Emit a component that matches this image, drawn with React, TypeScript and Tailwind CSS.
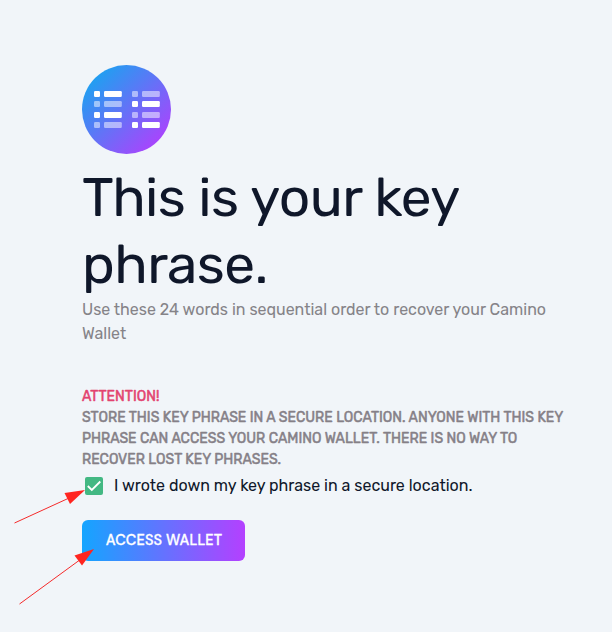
const tiles = [
  { x: 94, solid: [true, false, true, false] },
  { x: 132, solid: [false, true, false, true] },
];
const tileRows = [91, 101, 112, 122];

function PhraseIcon() {
  return (
    <svg className="block size-[89px]" viewBox="82 65 89 89" aria-hidden="true">
      <defs>
        <linearGradient id="disc" x1="0.05" y1="0.1" x2="0.9" y2="0.95">
          <stop offset="0" stopColor="#14a7f0" />
          <stop offset="1" stopColor="#b43dfe" />
        </linearGradient>
      </defs>
      <circle cx="126.5" cy="109.5" r="44.5" fill="url(#disc)" />
      {tiles.map((t) =>
        tileRows.map((y, i) => (
          <g key={`${t.x}-${y}`} fill="#fff" fillOpacity={t.solid[i] ? 1 : 0.5}>
            <rect x={t.x} y={y} width="6" height="6" rx="1.2" />
            <rect x={t.x + 10} y={y} width="17.8" height="6" rx="1.2" />
          </g>
        )),
      )}
    </svg>
  );
}

function Arrows() {
  return (
    <svg className="pointer-events-none absolute left-0 top-0 h-[632px] w-[110px]" viewBox="0 0 110 632" aria-hidden="true">
      <g stroke="#f52a2a" strokeWidth="1">
        <path d="M14.5 523 68 498.500" />
        <path d="M19.500 604 79 560.500" />
      </g>
      <path d="M85 490 64.500 493 70 504Z" fill="#ff2520" />
      <path d="M94 549 74.500 555.500 82 565.500Z" fill="#ff2520" />
    </svg>
  );
}

export default function App() {
  return (
    <main className="relative h-[632px] w-[612px] overflow-hidden bg-[#f1f5f9] pl-[82px] pt-[65px] font-['Rubik','Roboto',sans-serif] text-[#0f172a]">
      <PhraseIcon />
      <h1 className="mt-[10px] whitespace-nowrap text-[55px] font-normal leading-[67px] tracking-[-0.56px]">
        <span className="block">This is your key</span>
        <span className="block">phrase.</span>
      </h1>
      <p className="whitespace-nowrap text-[16px] leading-6 text-[#858388]">
        <span className="block">Use these 24 words in sequential order to recover your Camino</span>
        <span className="block">Wallet</span>
      </p>
      <div className="mt-10 whitespace-nowrap text-[14px] font-normal uppercase leading-[21px] text-[#858087] [-webkit-text-stroke:0.5px]">
        <p className="text-[#e3436f]">Attention!</p>
        <p>Store this key phrase in a secure location. Anyone with this key</p>
        <p>phrase can access your Camino wallet. There is no way to</p>
        <p>recover lost key phrases.</p>
      </div>
      <label className="mt-1 flex h-6 items-center whitespace-nowrap pl-[3px] text-[16px] leading-6">
        <span className="flex size-[18px] items-center justify-center rounded-[2px] bg-[#43b883]">
          <svg className="size-[18px]" viewBox="0 0 18 18" fill="none" stroke="#fff" strokeWidth="1.8" aria-hidden="true">
            <path d="m2.800 9 4 4 8.500-8.500" />
          </svg>
        </span>
        <span className="ml-[11px]">I wrote down my key phrase in a secure location.</span>
      </label>
      <button className="mt-[22px] flex h-[41px] w-[163px] items-center justify-center rounded-md bg-linear-to-r/srgb from-[#14a5ff] to-[#b440ff] font-['DM_Sans','Inter',sans-serif] text-[14.5px] font-medium text-white [-webkit-text-stroke:0.3px]">
        <span className="whitespace-nowrap pl-[1px] tracking-[0.15px]">ACCESS WALLET</span>
      </button>
      <Arrows />
    </main>
  );
}
